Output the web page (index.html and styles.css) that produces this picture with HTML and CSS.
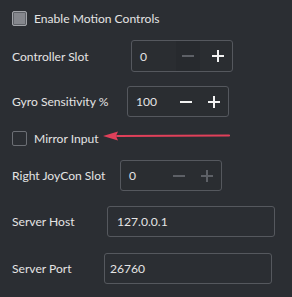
FILE: index.html
```html
<!DOCTYPE html>
<html lang="en">
<head>
  <meta charset="UTF-8">
  <title>Motion</title>
  <link rel="stylesheet" href="styles.css">
</head>
<body>
  <div class="panel">
    <div class="check-row">
      <span class="box checked"></span>
      <span>Enable Motion Controls</span>
    </div>

    <div class="row">
      <span class="label w-slot">Controller Slot</span>
      <div class="spin s-slot">
        <span class="val">0</span>
        <span class="btn minus off down"></span>
        <span class="btn plus"></span>
      </div>
    </div>

    <div class="row">
      <span class="label w-gyro">Gyro Sensitivity %</span>
      <div class="spin">
        <span class="val">100</span>
        <span class="btn minus"></span>
        <span class="btn plus"></span>
      </div>
    </div>

    <div class="check-row mirror">
      <span class="box"></span>
      <span>Mirror Input</span>
      <svg class="arrow" width="130" height="12" viewBox="0 0 130 12">
        <path d="M14 6 L126 5.5" stroke="#e0405a" stroke-width="2.2" fill="none" stroke-linecap="round"/>
        <path d="M0 6 L15 1.5 L13 6 L15 10.5 Z" fill="#e0405a"/>
      </svg>
    </div>

    <div class="row joy">
      <span class="label w-joy">Right JoyCon Slot</span>
      <div class="spin">
        <span class="val">0</span>
        <span class="btn minus off"></span>
        <span class="btn plus off"></span>
      </div>
    </div>

    <div class="row host">
      <span class="label w-host">Server Host</span>
      <div class="field">127.0.0.1</div>
    </div>

    <div class="row">
      <span class="label w-port">Server Port</span>
      <div class="field port">26760</div>
    </div>
  </div>
</body>
</html>
```

FILE: styles.css
```css
html,body {
  margin: 0;
  padding: 0;
  overflow: hidden;
}
body {
  background-color: #2b2e33;
  color: #e4e4e4;
  font: 12.1px Lato, "Noto Sans", sans-serif;
  width: 292px;
  height: 297px;
}
.panel {
  display: flex;
  flex-direction: column;
  padding: 11px 0 0 12px;
}
.check-row {
  display: flex;
  align-items: center;
  gap: 7px;
  height: 15px;
  position: relative;
}
.box {
  width: 13px;
  height: 13px;
  border: 1px solid #6c6f75;
  border-radius: 2px;
  box-sizing: content-box;
}
.box.checked {
  background-color: #85878d;
  border-color: #a2a4a9;
  box-shadow: inset 0 0 0 1px #5e6167;
}
.arrow {
  position: absolute;
  left: 91px;
  top: -1px;
}
.row {
  display: flex;
  align-items: center;
  margin-top: 14px;
}
.row.joy { margin-top: 9px; }
.row.host { margin-top: 15px; }
.row.host + .row { margin-top: 16px; }
.check-row.mirror { margin-top: 14px; }
.check-row + .row { margin-top: 14px; }

.label { flex: none; }
.w-slot { width: 119px; }
.w-gyro { width: 115px; }
.w-joy { width: 108px; }
.w-host { width: 95px; }
.w-port { width: 92px; }

.spin {
  display: flex;
  align-items: center;
  width: 102px;
  height: 31px;
  border: 1px solid #55585e;
  border-radius: 3px;
  box-sizing: border-box;
  background-color: #2a2d31;
}
.s-slot { height: 32px; }
.val {
  flex: 1;
  padding-left: 8px;
}
.btn {
  width: 28px;
  align-self: stretch;
  position: relative;
}
.btn.down {
  background-color: #272a2e;
  width: 24px;
  margin-right: 4px;
}
.btn::before,
.btn::after {
  content: "";
  position: absolute;
  left: 50%;
  top: 50%;
  background-color: #f2f2f2;
}
.btn::before {
  width: 12px;
  height: 2px;
  margin: -1px 0 0 -6px;
}
.plus::after {
  width: 2px;
  height: 12px;
  margin: -6px 0 0 -1px;
}
.minus::after { display: none; }
.btn.off::before,
.btn.off::after {
  background-color: #5d6066;
}
.field {
  width: 168px;
  height: 31px;
  border: 1px solid #55585e;
  border-radius: 3px;
  box-sizing: border-box;
  display: flex;
  align-items: center;
  padding-left: 9px;
}
.field.port { padding-left: 5px; }
```
